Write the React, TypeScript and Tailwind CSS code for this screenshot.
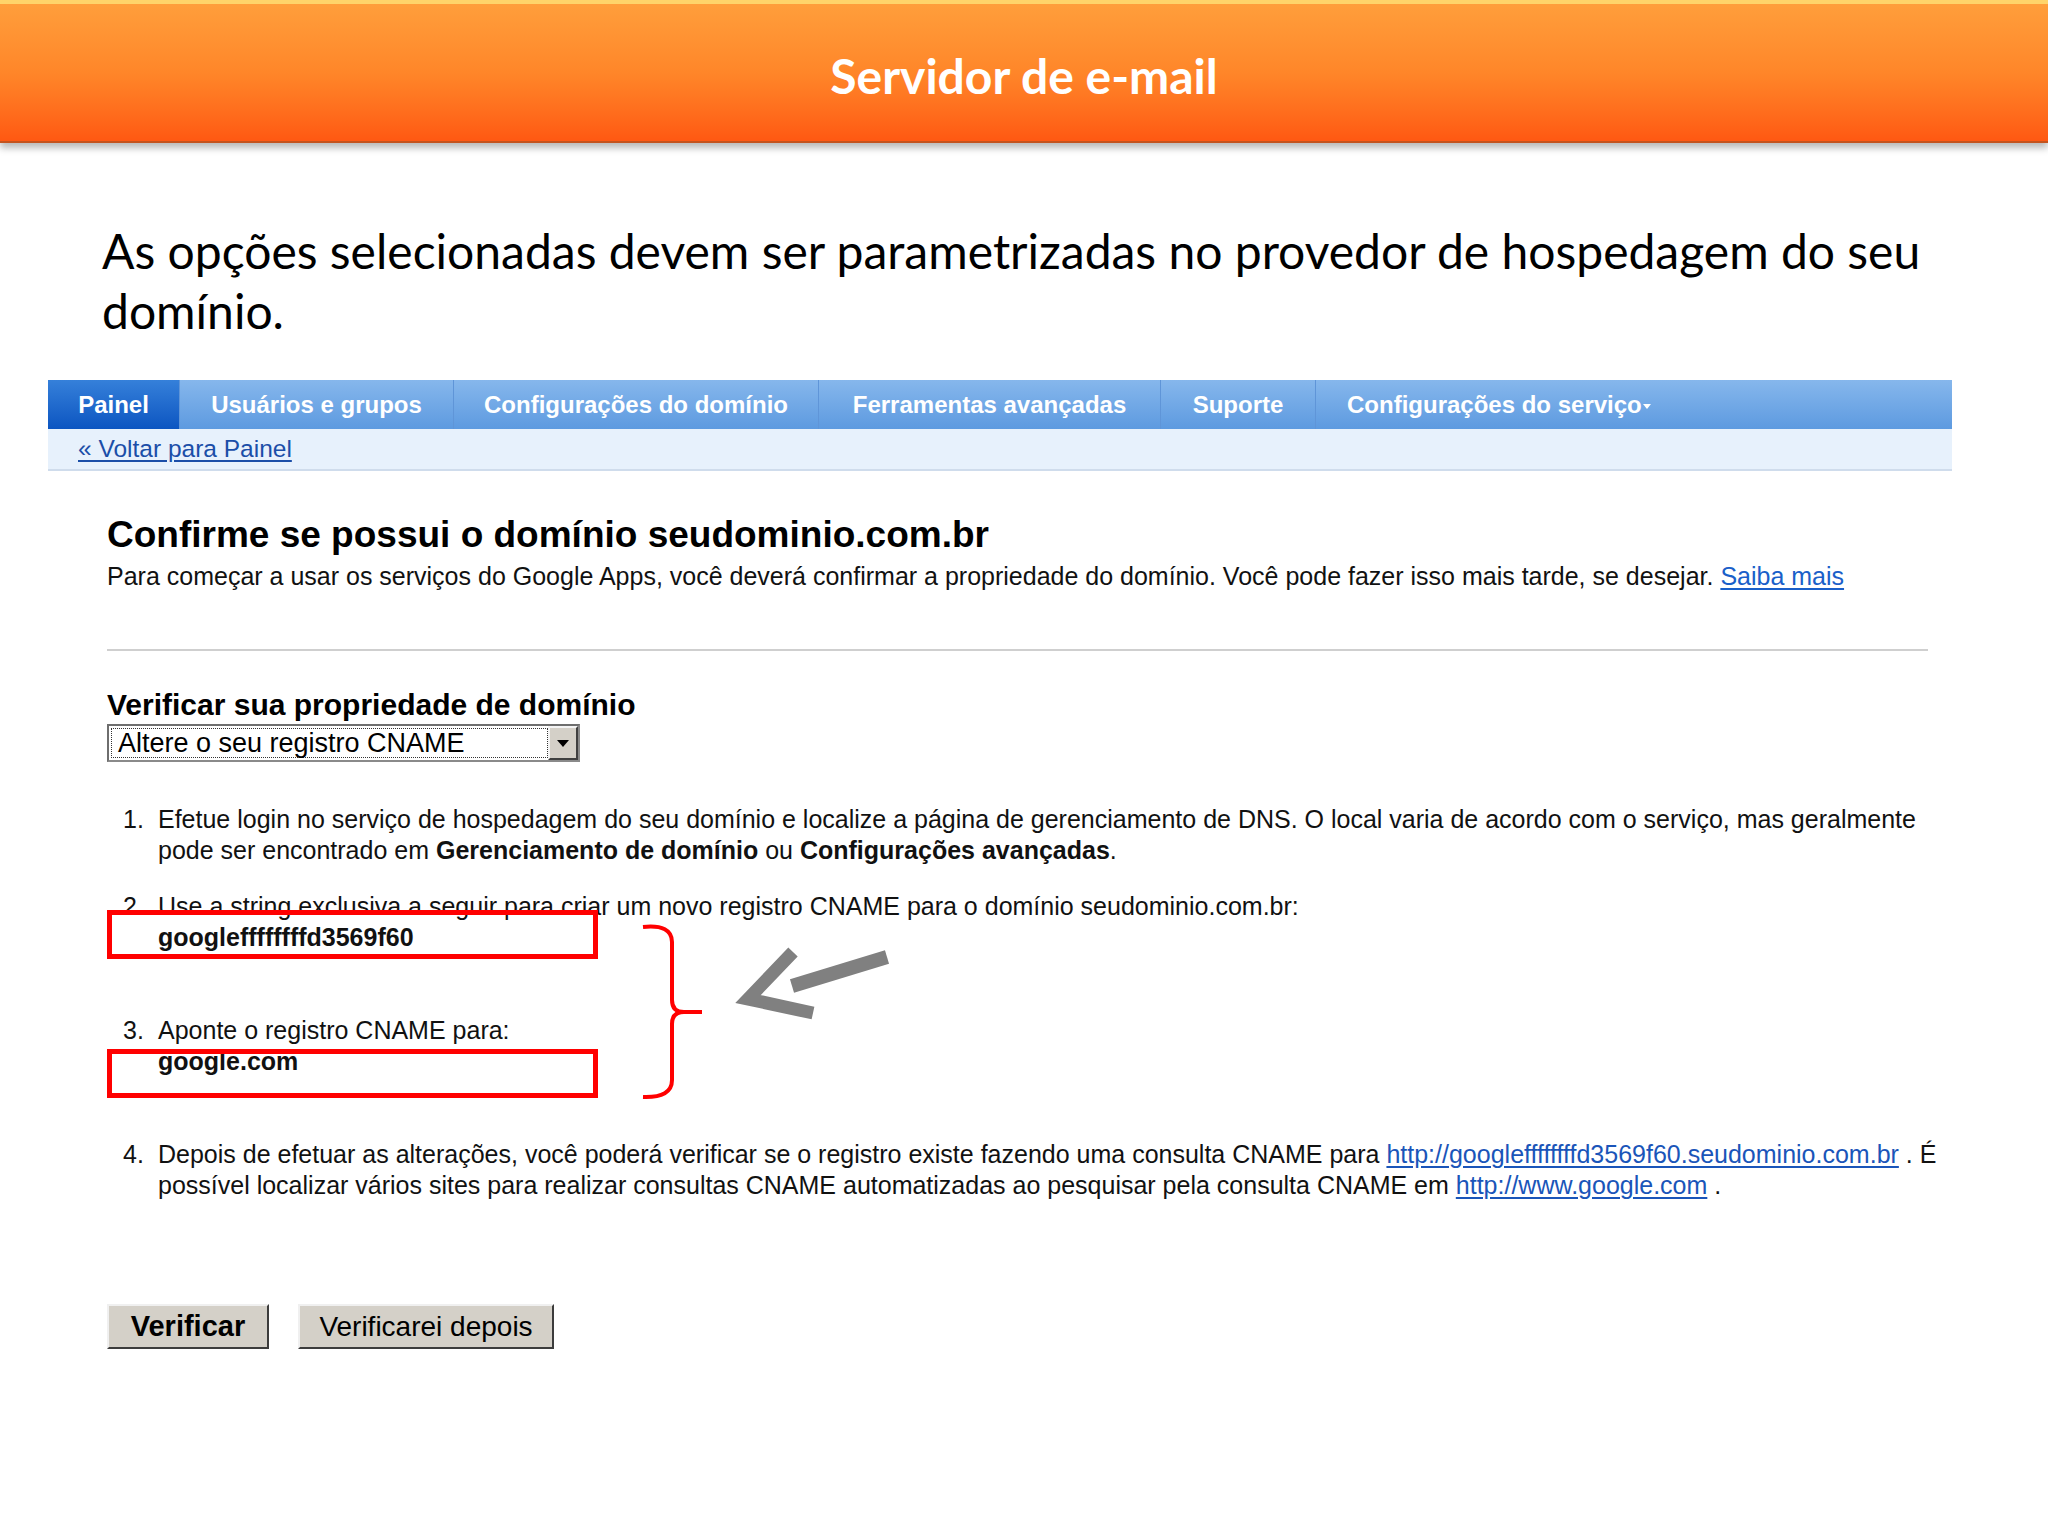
import React from "react";

const tabs = [
  { label: "Painel", cls: "w-[131px] bg-gradient-to-b from-[#3580da] to-[#0b55c1]" },
  { label: "Usuários e grupos", cls: "w-[274px] border-l border-[#5f95d8] bg-gradient-to-b from-[#86b7ec] to-[#5d9ae0]" },
  { label: "Configurações do domínio", cls: "w-[365px] border-l border-[#5f95d8] bg-gradient-to-b from-[#86b7ec] to-[#5d9ae0]" },
  { label: "Ferramentas avançadas", cls: "w-[342px] border-l border-[#5f95d8] bg-gradient-to-b from-[#86b7ec] to-[#5d9ae0]" },
  { label: "Suporte", cls: "w-[155px] border-l border-[#5f95d8] bg-gradient-to-b from-[#86b7ec] to-[#5d9ae0]" },
];

export default function App() {
  return (
    <div className="relative w-[2048px] h-[1536px] overflow-hidden bg-white">
      {/* Slide header */}
      <header className="h-[143px] border-t-[4px] border-[#ffd46a] border-b-[2px] border-b-[#c4531e] bg-gradient-to-b from-[#ff9e3b] via-[#ff8629] to-[#ff5812] shadow-[0_5px_7px_rgba(0,0,0,0.28)] flex items-center justify-center pt-[6px]">
        <h1 className="font-['Lato',sans-serif] font-bold text-[48px] leading-[60px] text-white">
          Servidor de e-mail
        </h1>
      </header>

      {/* Slide text */}
      <p className="mt-[78px] ml-[102px] font-['Lato',sans-serif] text-[48px] leading-[60px] text-black">
        As opções selecionadas devem ser parametrizadas no provedor de hospedagem do seu
        <br />
        domínio.
      </p>

      {/* Screenshot of web page */}
      <section className="mt-[39px] ml-[48px] w-[1904px] font-['Liberation_Sans',Arial,sans-serif] text-[#111]">
        <nav className="h-[49px] flex">
          {tabs.map((t) => (
            <div
              key={t.label}
              className={`${t.cls} h-full flex items-center justify-center text-white font-bold text-[24px]`}
            >
              {t.label}
            </div>
          ))}
          <div className="flex-1 h-full border-l border-[#5f95d8] bg-gradient-to-b from-[#86b7ec] to-[#5d9ae0] flex items-center pl-[31px] text-white font-bold text-[24px]">
            Configurações do serviço
            <svg width="8" height="6" viewBox="0 0 8 6" className="ml-[1px] mt-[4px]">
              <path d="M0 0 L8 0 L4 5 Z" fill="white" />
            </svg>
          </div>
        </nav>
        <div className="h-[42px] bg-[#e7f1fc] border-b-2 border-[#cfdcec] flex items-center pl-[30px]">
          <a className="text-[24.5px] text-[#1b4ea8] underline underline-offset-[3px]">« Voltar para Painel</a>
        </div>

        <div className="pl-[59px]">
          <h2 className="mt-[42px] text-[37px] leading-[44px] font-bold text-black">
            Confirme se possui o domínio seudominio.com.br
          </h2>
          <p className="mt-[4px] text-[25px] leading-[30px]">
            Para começar a usar os serviços do Google Apps, você deverá confirmar a propriedade do domínio. Você pode fazer
            isso mais tarde, se desejar.{" "}
            <a className="text-[#1a5fc9] underline underline-offset-[3px]">Saiba mais</a>
          </p>

          <div className="mt-[58px] w-[1821px] h-[2px] bg-[#cfcfcf]" />

          <h3 className="mt-[37px] text-[30px] leading-[34px] font-bold text-black">
            Verificar sua propriedade de domínio
          </h3>
          <div className="mt-[2px] w-[473px] h-[38px] flex border-2 border-t-[#6e6e6e] border-l-[#6e6e6e] border-r-[#8a8a8a] border-b-[#8a8a8a] bg-white">
            <div className="flex-1 my-[2px] ml-[2px] border border-dotted border-[#333] flex items-center pl-[6px] text-[27px] text-black">
              Altere o seu registro CNAME
            </div>
            <div className="w-[30px] bg-[#d4d0c8] border-2 border-t-[#f4f4f4] border-l-[#f4f4f4] border-r-[#404040] border-b-[#404040] flex items-center justify-center">
              <svg width="12" height="7" viewBox="0 0 12 7">
                <path d="M0 0 L12 0 L6 7 Z" fill="black" />
              </svg>
            </div>
          </div>

          <ol className="mt-[42px] text-[25px] leading-[31px]">
            <li className="grid grid-cols-[51px_1fr] mb-[25px]">
              <span className="pl-[16px]">1.</span>
              <span>
                Efetue login no serviço de hospedagem do seu domínio e localize a página de gerenciamento de DNS. O local varia de
                acordo com o serviço, mas geralmente
                <br />
                pode ser encontrado em <b>Gerenciamento de domínio</b> ou <b>Configurações avançadas</b>.
              </span>
            </li>
            <li className="grid grid-cols-[51px_1fr] mb-[62px]">
              <span className="pl-[16px]">2.</span>
              <span>
                Use a string exclusiva a seguir para criar um novo registro CNAME para o domínio seudominio.com.br:
                <br />
                <b>googleffffffffd3569f60</b>
              </span>
            </li>
            <li className="grid grid-cols-[51px_1fr] mb-[62px]">
              <span className="pl-[16px]">3.</span>
              <span>
                Aponte o registro CNAME para:
                <br />
                <b>google.com</b>
              </span>
            </li>
            <li className="grid grid-cols-[51px_1fr]">
              <span className="pl-[16px]">4.</span>
              <span>
                Depois de efetuar as alterações, você poderá verificar se o registro existe fazendo uma consulta CNAME para{" "}
                <a className="text-[#1a55b9] underline underline-offset-[3px]">http://googleffffffffd3569f60.seudominio.com.br</a> . É
                <br />
                possível localizar vários sites para realizar consultas CNAME automatizadas ao pesquisar pela consulta CNAME em{" "}
                <a className="text-[#1a55b9] underline underline-offset-[3px]">http://www.google.com</a> .
              </span>
            </li>
          </ol>

          <div className="mt-[103px] flex gap-[29px]">
            <button className="w-[162px] h-[45px] bg-[#d4d0c8] border-2 border-t-[#f0f0f0] border-l-[#f0f0f0] border-r-[#3c3c3c] border-b-[#3c3c3c] text-[29px] font-bold text-black flex items-center justify-center">
              Verificar
            </button>
            <button className="w-[256px] h-[45px] bg-[#d4d0c8] border-2 border-t-[#f0f0f0] border-l-[#f0f0f0] border-r-[#3c3c3c] border-b-[#3c3c3c] text-[28px] text-black flex items-center justify-center">
              Verificarei depois
            </button>
          </div>
        </div>
      </section>

      {/* Annotations drawn over the screenshot */}
      <div className="absolute left-[107px] top-[910px] w-[491px] h-[49px] border-[5px] border-[#ff0000]" />
      <div className="absolute left-[107px] top-[1049px] w-[491px] h-[49px] border-[5px] border-[#ff0000]" />
      <svg className="absolute left-[640px] top-[920px]" width="70" height="184" viewBox="0 0 70 184">
        <path
          d="M3 7 Q32 4 32 22 L32 80 Q32 92 44 92 L62 92 M44 92 Q32 92 32 104 L32 160 Q32 178 3 177"
          fill="none"
          stroke="#ff0000"
          strokeWidth="4"
        />
      </svg>
      <svg className="absolute left-[720px] top-[930px]" width="180" height="100" viewBox="0 0 180 100">
        <polyline points="73,22 28,69 93,83" fill="none" stroke="#808080" strokeWidth="13" strokeLinejoin="miter" />
        <line x1="72" y1="56" x2="167" y2="27" stroke="#808080" strokeWidth="14" />
      </svg>
    </div>
  );
}
